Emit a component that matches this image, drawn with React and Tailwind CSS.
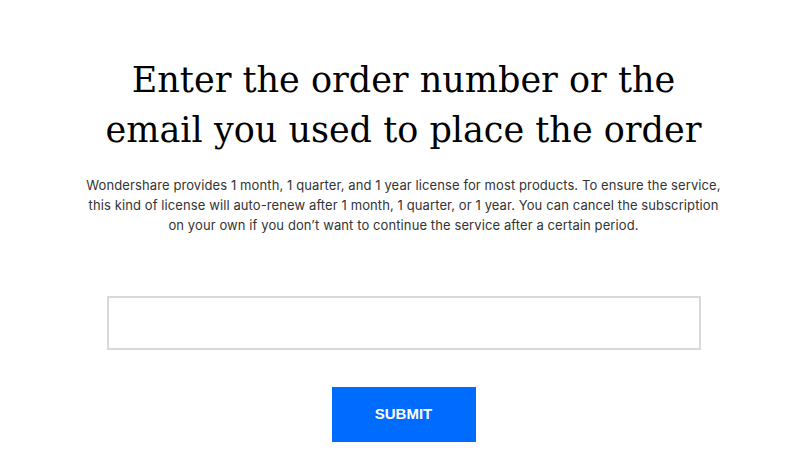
export default function App() {
  return (
    <div className="w-[800px] h-[456px] bg-white overflow-hidden flex flex-col items-center pl-[7px]">
      <h1 className="mt-[55px] text-center text-[35px] leading-[50px] text-black font-['DejaVu_Serif',serif] font-normal">
        Enter the order number or the
        <br />
        email you used to place the order
      </h1>
      <p className="mt-[20px] w-[646px] text-center text-[13px] leading-[20px] tracking-[0.1px] text-[#333] font-['Inter',sans-serif]">
        Wondershare provides 1 month, 1 quarter, and 1 year license for most products. To ensure the service,
        this kind of license will auto-renew after 1 month, 1 quarter, or 1 year. You can cancel the subscription
        on your own if you don’t want to continue the service after a certain period.
      </p>
      <input
        type="text"
        className="mt-[61px] w-[594px] h-[54px] border-2 border-[#d9d9d9] bg-white outline-none px-4"
      />
      <button className="mt-[37px] w-[144px] h-[55px] bg-[#006cff] text-white text-[15px] font-bold font-['Liberation_Sans',sans-serif]">
        SUBMIT
      </button>
    </div>
  );
}
